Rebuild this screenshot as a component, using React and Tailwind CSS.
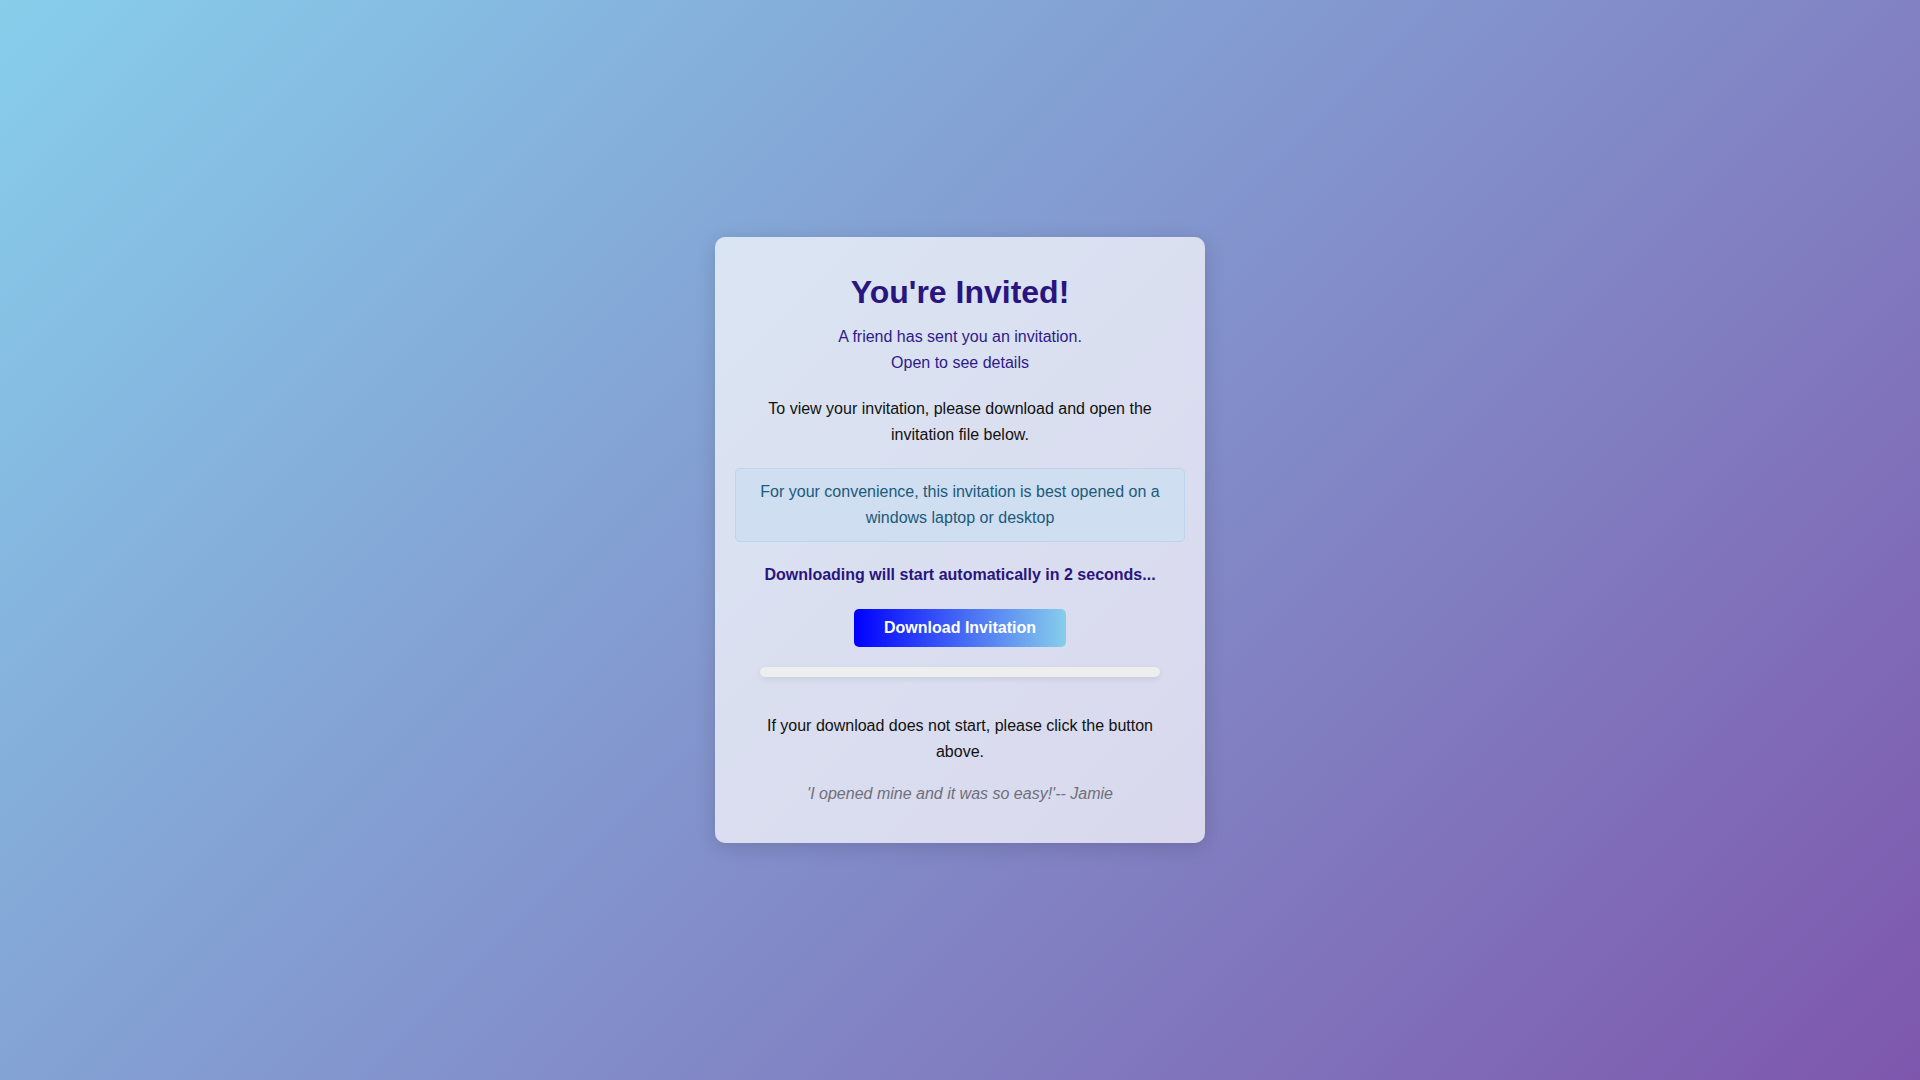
import React from "react";

const App = () => {
  return (
    <div
      className="min-h-screen w-full flex items-center justify-center bg-[linear-gradient(135deg,#87ceeb,#7e57ad)]"
      style={{ fontFamily: '"Liberation Sans", Arial, sans-serif' }}
    >
      <div className="w-[490px] bg-white/70 rounded-[10px] shadow-[0_4px_20px_rgba(0,0,0,0.15)] px-[20px] pt-[31px] pb-[36px] text-center text-[16px] leading-[26px]">
        <h1 className="text-[32px] leading-[48px] font-bold text-[#2a1580]">
          You're Invited!
        </h1>

        <p className="mt-[8px] text-[#2e1a8a]">
          A friend has sent you an invitation.
          <br />
          Open to see details
        </p>

        <p className="mt-[20px] text-[#111]">
          To view your invitation, please download and open the invitation file below.
        </p>

        {/* note box */}
        <div className="mt-[20px] bg-[#cfdef0] border border-[#bad5ed] rounded-[5px] px-[10px] py-[10px] text-[#1b5a7b]">
          For your convenience, this invitation is best opened on a windows laptop or desktop
        </div>

        <p className="mt-[20px] font-bold text-[#2a1580]">
          Downloading will start automatically in 2 seconds...
        </p>

        <div className="mt-[21px] flex justify-center">
          <button className="w-[212px] h-[38px] rounded-[5px] text-white font-bold bg-[linear-gradient(to_right,#0000ff,#87ceeb)]">
            Download Invitation
          </button>
        </div>

        <div className="mt-[20px] mx-auto w-[400px] h-[10px] rounded-full bg-[#eeeeee] shadow-[0_2px_6px_rgba(0,0,0,0.08)]" />

        <p className="mt-[36px] px-[20px] text-[#111]">
          If your download does not start, please click the button above.
        </p>

        <p className="mt-[16px] italic text-[#6f6f7a]">
          'I opened mine and it was so easy!'-- Jamie
        </p>
      </div>
    </div>
  );
};

export default App;
